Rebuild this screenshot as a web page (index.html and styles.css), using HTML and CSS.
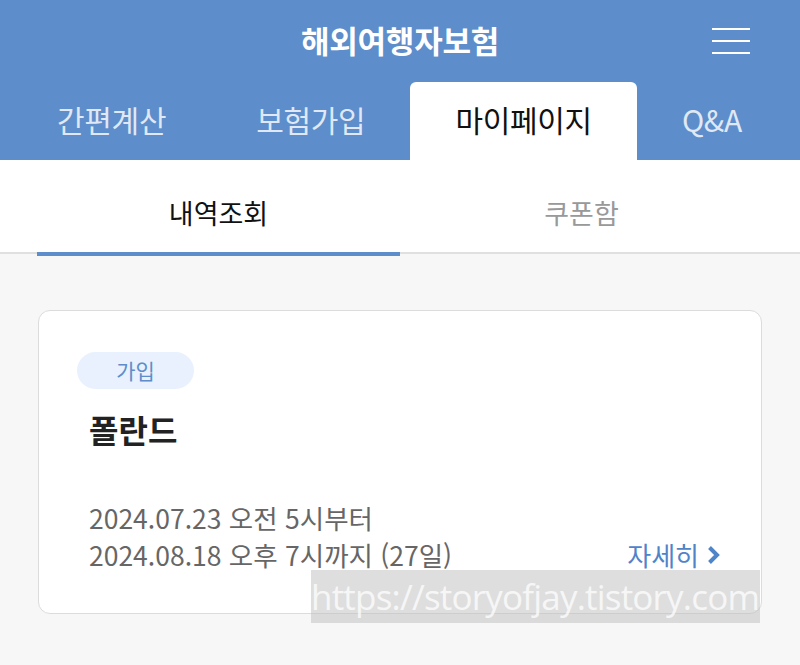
FILE: index.html
```html
<!DOCTYPE html>
<html lang="ko">
<head>
    <meta charset="UTF-8">
    <meta name="viewport" content="width=device-width, initial-scale=1.0">
    <title>해외여행자보험</title>
    <link rel="stylesheet" href="styles.css">
</head>
<body>

<header class="header">
    <div class="topbar">
        <h1 class="title">해외여행자보험</h1>
        <button class="menu" aria-label="메뉴">
            <span></span><span></span><span></span>
        </button>
    </div>
    <nav class="tabs">
        <a class="tab">간편계산</a>
        <a class="tab">보험가입</a>
        <a class="tab active">마이페이지</a>
        <a class="tab">Q&amp;A</a>
    </nav>
</header>

<div class="subnav">
    <div class="subtabs">
        <a class="subtab active">내역조회</a>
        <a class="subtab">쿠폰함</a>
    </div>
</div>

<main class="content">
    <div class="card">
        <span class="badge">가입</span>
        <h2 class="country">폴란드</h2>
        <div class="period">
            <p>2024.07.23 오전 5시부터</p>
            <div class="period-row">
                <p>2024.08.18 오후 7시까지 (27일)</p>
                <a class="more">자세히
                    <svg width="15" height="20" viewBox="0 0 15 20"><path d="M3.5 2.5l7.5 7.5-7.5 7.5" fill="none" stroke="currentColor" stroke-width="4"/></svg>
                </a>
            </div>
        </div>
    </div>
    <div class="watermark">https://storyofjay.tistory.com</div>
</main>

</body>
</html>
```

FILE: styles.css
```css
html {
    background-color: #f7f7f7;
}
body {
    margin: 0;
    font-family: "Noto Sans CJK KR", "Noto Sans", sans-serif;
    color: #222;
    background-color: #f7f7f7;
    min-height: 665px;
}
.header {
    background-color: #5d8dca;
}
.topbar {
    height: 82px;
    display: flex;
    align-items: center;
    justify-content: center;
    position: relative;
}
.title {
    margin: 0 0 4px;
    font-size: 31px;
    font-weight: bold;
    color: #fff;
    letter-spacing: -0.2px;
}
.menu {
    position: absolute;
    right: 50px;
    top: 28px;
    width: 38px;
    height: 26px;
    padding: 0;
    border: none;
    background: none;
    display: flex;
    flex-direction: column;
    justify-content: space-between;
}
.menu span {
    display: block;
    height: 2px;
    background-color: #fff;
}
.tabs {
    display: flex;
    height: 78px;
    padding-left: 12px;
}
.tab {
    padding: 0 45px 3px;
    line-height: 75px;
    font-size: 30px;
    color: #dfe8f4;
    letter-spacing: -0.3px;
}
.tab.active {
    background-color: #fff;
    color: #111;
    border-radius: 6px 6px 0 0;
}
.subnav {
    background-color: #fff;
    border-bottom: 2px solid #e0e0e0;
}
.subtabs {
    display: flex;
    align-items: flex-start;
    height: 92px;
    margin: 0 37px;
}
.subtab {
    flex: 1;
    text-align: center;
    padding: 35px 0 21px;
    line-height: 36px;
    font-size: 27px;
    color: #999;
}
.subtab.active {
    color: #111;
    border-bottom: 4px solid #5d8dca;
}
.content {
    position: relative;
    padding: 56px 38px 40px;
}
.card {
    background-color: #fff;
    border: 1px solid #dcdcdc;
    border-radius: 12px;
    padding: 41px 40px 40px 50px;
}
.badge {
    display: inline-block;
    margin-left: -12px;
    width: 117px;
    height: 37px;
    line-height: 37px;
    text-align: center;
    border-radius: 19px;
    background-color: #e8f1fd;
    color: #5d8dca;
    font-size: 21px;
}
.country {
    margin: 20px 0 0;
    line-height: 40px;
    font-size: 32px;
    font-weight: bold;
    color: #222;
}
.period {
    margin-top: 50px;
    font-size: 26.5px;
    color: #666;
}
.period p {
    margin: 0;
    line-height: 37px;
}
.period-row {
    display: flex;
    justify-content: space-between;
    align-items: center;
}
.more {
    display: flex;
    align-items: center;
    gap: 7px;
    color: #4f84c9;
    font-size: 26px;
    line-height: 37px;
}
.watermark {
    position: absolute;
    left: 311px;
    top: 316px;
    width: 449px;
    height: 53px;
    background-color: rgba(190, 190, 190, 0.5);
    color: rgba(255, 255, 255, 0.75);
    font-family: "Open Sans", sans-serif;
    font-size: 35px;
    line-height: 53px;
    white-space: nowrap;
    overflow: hidden;
    letter-spacing: -0.8px;
}
```
